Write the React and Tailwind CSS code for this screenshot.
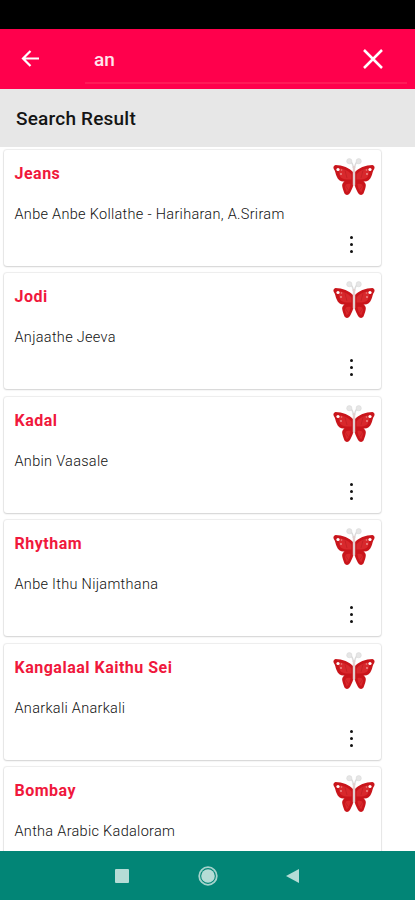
const songs = [
  { movie: "Jeans", song: "Anbe Anbe Kollathe - Hariharan, A.Sriram" },
  { movie: "Jodi", song: "Anjaathe Jeeva" },
  { movie: "Kadal", song: "Anbin Vaasale" },
  { movie: "Rhytham", song: "Anbe Ithu Nijamthana" },
  { movie: "Kangalaal Kaithu Sei", song: "Anarkali Anarkali" },
  { movie: "Bombay", song: "Antha Arabic Kadaloram" },
];

const Wing = () => (
  <>
    <path
      d="M20.500 14.500C17 10 9 7 2.500 7C.3 7.500 0 9.500 .8 11C2.300 13 2.500 15.500 3.500 18C5 22 8 24 11.500 23.500C9 25 8.800 27 9.500 29.500C10 31.500 10.500 33 11.500 35.500C13 37.800 16 37.300 17.500 34C19 31 20.300 28.500 20.500 25Z"
      fill="#c9151b"
    />
    <path
      d="M18.500 16.500C15.500 12.500 10 10 5 10.500C6 14 6 18 8.500 20C11.500 22 15.500 21.500 18.500 21.500Z"
      fill="#d8282c"
    />
    <path
      d="M17.500 26C14.500 25 12 26.500 11.800 28.500L13.500 34C15.500 34 17 30 17.500 26Z"
      fill="#da272b"
    />
    <path d="M12 12.500L14 20M12 27L15.500 32" stroke="#bd1e22" strokeWidth=".7" />
    <circle cx="5" cy="11.500" r="1.600" fill="#fff" />
    <circle cx="8" cy="16" r=".9" fill="#ee9a98" />
    <circle cx="8.500" cy="12" r=".8" fill="#ea8583" />
    <path
      d="M20.300 10C20 6 18.500 4 17 3.500"
      stroke="#dcdcdc"
      strokeWidth="1.400"
      fill="none"
    />
    <circle cx="16.300" cy="3.200" r="2.600" fill="#e6e6e6" stroke="#dadada" strokeWidth=".6" />
  </>
);

const Butterfly = () => (
  <svg className="h-[38px] w-[42px]" viewBox="0 0 42 38" fill="none">
    <Wing />
    <g transform="matrix(-1 0 0 1 42 0)">
      <Wing />
    </g>
    <path d="M21 9V27" stroke="#e3cfce" strokeWidth="2.400" strokeLinecap="round" />
  </svg>
);

const SongCard = ({ movie, song }) => (
  <div className="flex h-[116px] shrink-0 justify-between rounded-[3px] bg-white pl-[10.500px] shadow-[0_0_1px_1px_rgba(0,0,0,0.07),0_1px_2px_rgba(0,0,0,0.12)]">
    <div className="whitespace-nowrap pt-[14px]">
      <h2 className="text-[16px] leading-5 font-bold tracking-[0.5px] text-[#f0183c]">
        {movie}
      </h2>
      <p className="mt-[21px] text-[14.500px] leading-5 font-light tracking-[0.3px] text-[#111]">
        {song}
      </p>
    </div>
    <div className="flex flex-col items-end pt-[8px] pr-[6px]">
      <Butterfly />
      <button className="mt-[40px] mr-[21.500px] flex flex-col gap-[4px]">
        <span className="size-[3px] rounded-full bg-[#111]" />
        <span className="size-[3px] rounded-full bg-[#111]" />
        <span className="size-[3px] rounded-full bg-[#111]" />
      </button>
    </div>
  </div>
);

const SearchBar = () => (
  <header className="flex h-[59.500px] shrink-0 items-center bg-[#ff004c] pr-2">
    <svg
      className="ml-[21px] size-[19px]"
      viewBox="0 0 19 19"
      fill="none"
      stroke="#fff"
      strokeWidth="2.200"
    >
      <path d="M18 9.500H2M9.500 2L2 9.500L9.500 17" />
    </svg>
    <div className="ml-[45px] flex h-[55px] flex-1 items-center self-start border-b-2 border-[#ff1a58] pl-[9px]">
      <span className="mt-[8px] text-[19px] leading-6 font-medium text-[#ffe4ec]">
        an
      </span>
      <svg
        className="mt-[6px] mr-[24px] ml-auto size-[20px]"
        viewBox="0 0 20 20"
        stroke="#fff"
        strokeWidth="2.500"
      >
        <path d="M1 1L19 19M19 1L1 19" />
      </svg>
    </div>
  </header>
);

const NavBar = () => (
  <nav className="flex h-[49px] shrink-0 items-center bg-[#028576] pl-[115px]">
    <div className="size-[14px] rounded-[1px] bg-[#b5dcd6]" />
    <svg className="ml-[69px] size-[20px]" viewBox="0 0 20 20" fill="none">
      <circle cx="10" cy="10" r="8.800" stroke="#a5d3cc" strokeWidth="1.800" />
      <circle cx="10" cy="10" r="6.800" fill="#b5dcd6" />
    </svg>
    <svg className="ml-[68px] h-[14px] w-[13px]" viewBox="0 0 13 14">
      <path d="M13 0V14L0 7Z" fill="#b5dcd6" />
    </svg>
  </nav>
);

const App = () => {
  return (
    <div className="flex h-screen flex-col overflow-hidden bg-white font-['Roboto',sans-serif]">
      <div className="h-[29px] shrink-0 bg-black" />
      <SearchBar />
      <div className="flex h-[58px] shrink-0 items-center bg-[#e7e7e7] pt-[3px] pl-[16px]">
        <h1 className="text-[19px] font-medium tracking-[0.2px] text-[#141414]">
          Search Result
        </h1>
      </div>
      <main className="flex min-h-0 flex-1 flex-col gap-[7.500px] overflow-hidden pt-[3.250px] pr-[34.500px] pl-[4px]">
        {songs.map((item) => (
          <SongCard key={item.movie} {...item} />
        ))}
      </main>
      <NavBar />
    </div>
  );
};

export default App;
